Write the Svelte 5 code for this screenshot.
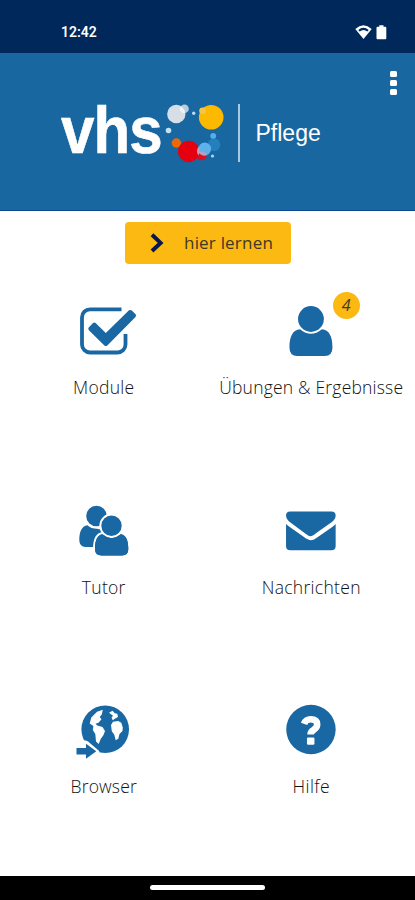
<script>
  const tiles = [
    { icon: 'module', label: 'Module', spacing: 0.3 },
    { icon: 'user', label: 'Übungen & Ergebnisse', spacing: 0.2, badge: 4 },
    { icon: 'users', label: 'Tutor', spacing: 0.3 },
    { icon: 'mail', label: 'Nachrichten', spacing: 0.3 },
    { icon: 'globe', label: 'Browser', spacing: 0.15 },
    { icon: 'help', label: 'Hilfe', spacing: 0.4 }
  ];
</script>

<div class="screen">
  <div class="status">
    <span class="time">12:42</span>
    <svg width="34" height="18" viewBox="354 23 34 18">
      <path d="M363.500 39 L355.300 29 Q363.500 21.600 371.700 29 Z" fill="#fff" />
      <path d="M358.300 29.900 Q363.500 25.700 368.700 29.900 L367.400 31.500 Q363.500 28.500 359.600 31.500 Z" fill="#00285a" />
      <path d="M379.300 25.200h4.200v1.600h1.800q1 0 1 1v10.500q0 1-1 1h-7.800q-1 0-1-1v-10.500q0-1 1-1h1.800z" fill="#fff" />
    </svg>
  </div>

  <header>
    <div class="brand">
      <span class="vhs">vhs</span>
      <svg class="dots" width="62" height="64" viewBox="164 100 62 64">
        <circle cx="184.500" cy="107.800" r="4.300" fill="#b9cde0" />
        <circle cx="176.300" cy="113" r="9.200" fill="#d6dee7" />
        <path d="M180.500 105.200a4.300 4.300 0 0 0 4.500 6.600a9.200 9.200 0 0 0-4.500-6.600" fill="#f0f3f6" />
        <circle cx="193.700" cy="112.200" r="1.700" fill="#b4dcf5" />
        <circle cx="211.200" cy="116.200" r="12.300" fill="#fdb900" />
        <circle cx="202.600" cy="109.800" r="3.400" fill="#f3c64a" />
        <circle cx="168.500" cy="129.500" r="2.800" fill="#c3e2f6" />
        <circle cx="213.200" cy="135" r="2.900" fill="#55aee8" />
        <circle cx="214" cy="143.800" r="6.300" fill="#2480bd" />
        <circle cx="176.400" cy="142" r="4.700" fill="#ef6807" />
        <circle cx="201.500" cy="154" r="5.300" fill="#d51224" />
        <circle cx="188.700" cy="150.500" r="10.700" fill="#e6000f" />
        <circle cx="204.700" cy="148" r="6.400" fill="#5eb2e9" />
        <path d="M199 145.500a10.700 10.700 0 0 1-.5 9a6.400 6.400 0 0 1 .5-9M198.800 151.500a5.300 5.300 0 0 1 8 2.500a6.400 6.400 0 0 1-8-2.500" fill="#bc9fbd" />
        <circle cx="212.500" cy="155" r="1.600" fill="#a9d8f5" />
      </svg>
      <span class="rule"></span>
      <span class="product">Pflege</span>
    </div>
    <div class="more"><i></i><i></i><i></i></div>
  </header>

  <main>
    <button>
      <svg width="16" height="22" viewBox="149 233 16 22">
        <path d="M152 235.800l8.600 8.100l-8.600 8.100" fill="none" stroke="#06194f" stroke-width="4" />
      </svg>
      <span>hier lernen</span>
    </button>

    <div class="grid">
      {#each tiles as t}
        <div class="tile">
          <div class="pic">
            {#if t.icon === 'module'}
              <svg viewBox="54 295 100 70">
                <path d="M121.500 309.300H90a8 8 0 0 0-8 8V344.500a8 8 0 0 0 8 8H117.500a8 8 0 0 0 8-8V334" fill="none" stroke="#1967a3" stroke-width="3.800" />
                <path d="M88.700 327.500L93 322.900Q94.300 322 95.600 323.100L105.800 333L129 310.300Q130.400 309.400 131.800 310.600L135.600 314.300Q136.500 315.600 135.500 316.900L107.300 345.400Q105.800 346.600 104.400 345.400L88.900 330.200Q87.700 328.900 88.700 327.500Z" />
              </svg>
            {:else if t.icon === 'user'}
              <svg viewBox="261.250 295 100 70">
                <circle cx="311.200" cy="319" r="12.900" />
                <path d="M300.300 329.200Q311.200 338.200 322.100 329.200C329.500 329.500 332.700 336.500 332.700 347.500Q332.700 356 325 356H297.500Q289.700 356 289.700 347.500C289.700 336.500 293 329.500 300.300 329.200Z" />
              </svg>
            {:else if t.icon === 'users'}
              <svg viewBox="54 495 100 70">
                <circle cx="96.500" cy="516" r="10.300" />
                <path d="M87.400 525.200Q91 528.800 97 528.800L103 530V547H85.500Q79.300 546.500 79.300 540C79.300 532 81.500 526 87.400 525.200Z" />
                <g stroke="#fff" stroke-width="4" paint-order="stroke" stroke-linejoin="round">
                  <path d="M103.200 534Q111.600 541 120 534C126 534.300 128.300 540 128.300 549Q128.300 555.500 122 555.500H101.500Q95 555.500 95 549C95 540 97.400 534.300 103.200 534Z" />
                  <circle cx="111.500" cy="525.800" r="10.200" />
                </g>
                <path d="M103.200 534.800Q111.600 541.500 120 534.800C126 535 128.300 540 128.300 549Q128.300 555.500 122 555.500H101.500Q95 555.500 95 549C95 540 97.400 535 103.200 534.800Z" />
              </svg>
            {:else if t.icon === 'mail'}
              <svg viewBox="261.250 495 100 70">
                <path d="M290.500 511.400H331.500Q335.900 511.400 335.900 515.500Q335.900 519 332.500 521.700L316.500 533Q312.500 536.300 310.800 536.300Q309 536.300 305.500 533.500L290 522Q286.300 519 286.300 515.600Q286.300 511.400 290.500 511.400Z" />
                <path d="M286.300 524Q287.800 525.500 290 527L303.500 536.500Q308.500 540.300 311.100 540.300Q313.800 540.300 318.500 536.800L332.500 527Q334.500 525.500 335.900 524V546Q335.900 550.300 331.500 550.300H290.500Q286.300 550.300 286.300 546Z" />
              </svg>
            {:else if t.icon === 'globe'}
              <svg viewBox="54 694.500 100 70">
                <circle cx="105.200" cy="729.800" r="23.800" />
                <g fill="#fff">
                  <path d="M89.700 724L91.300 718L97 712.300L102.800 710.300L101.800 715L99.700 717.600L101.500 719.700L98.500 723.300L95.500 724.300L97.300 726L102.500 727.600L105 731.500L103.500 735.500L100.700 739.500L98.700 744.500L96 742L95.300 734.500L92.800 730.500L93.400 726.500Z" />
                  <path d="M109 713.200L112.500 711.300L114.800 713.800L117.300 714.300L118 717.500L114.800 719.300L112.800 720.800L111.500 718.300L113 716.300Z" />
                  <path d="M111 725.500L113 722.300L118.200 721.500L121.300 723.300L122.800 728L122.500 731.500L119.500 734.500L118.300 739.300L115.700 740.700L114.300 735.300L111.800 731.700Z" />
                  <path d="M72 741H86L88 742L99.500 751.700L92 761H72Z" />
                </g>
                <path d="M76.500 748.600H86V744.200L96.300 751.700L86 759.200V754.900H76.500Z" />
              </svg>
            {:else}
              <svg viewBox="261.250 694.500 100 70">
                <circle cx="311.200" cy="730" r="24.700" />
                <path d="M304.300 724.300Q306 719.800 310.900 719.800Q317.400 719.800 317.400 725Q317.400 728 314 730.300Q310.800 732.200 310.800 735" fill="none" stroke="#fff" stroke-width="6.600" />
                <rect x="307.200" y="738" width="7.500" height="7.200" rx="1.200" fill="#fff" />
              </svg>
            {/if}
            {#if t.badge}<span class="badge">{t.badge}</span>{/if}
          </div>
          <span class="label" style="letter-spacing: {t.spacing}px">{t.label}</span>
        </div>
      {/each}
    </div>
  </main>

  <footer><span></span></footer>
</div>

<style>
  :global(body) { margin: 0; background: #fff; }
  .screen { width: 415px; height: 900px; display: flex; flex-direction: column; overflow: hidden; background: #fff; font-family: "Open Sans", "Noto Sans", sans-serif; }
  .status { height: 52.500px; flex: none; box-sizing: border-box; padding: 11px 27px 0 61px; display: flex; align-items: center; justify-content: space-between; background: #00285a; }
  .time { color: #fff; font: 600 14px/20px Roboto, sans-serif; letter-spacing: 0; }
  header { height: 158.500px; flex: none; box-sizing: border-box; border-bottom: 1.500px solid #0c4794; background: #1967a1; display: flex; justify-content: space-between; padding-left: 61px; padding-right: 18px; }
  .brand { display: flex; align-items: center; height: 160px; }
  .vhs { color: #fff; font: bold 66px/64px "Liberation Sans", Arial, sans-serif; width: 103px; letter-spacing: -1px; padding-bottom: 6px; transform: scaleX(0.91); transform-origin: 1px 0; -webkit-text-stroke: 0.600px #fff; }
  .dots { flex: none; }
  .rule { width: 1.500px; height: 58px; margin-left: 12px; background: #a9c9e0; }
  .product { color: #fff; margin-left: 16px; font: 23px/30px "Liberation Sans", Arial, sans-serif; }
  .more { display: flex; flex-direction: column; gap: 2.500px; padding-top: 18px; }
  .more i { width: 7px; height: 6.500px; border-radius: 1.500px; background: #fff; }
  main { flex: 1; min-height: 0; display: flex; flex-direction: column; align-items: center; padding-top: 11px; }
  button { width: 166px; height: 42px; flex: none; margin: 0; border: 0; border-radius: 4px; background: #fbb911; display: flex; align-items: center; padding: 0 0 0 24px; gap: 19.500px; color: #40382b; font: 400 17px/22px "Open Sans", "Noto Sans", sans-serif; letter-spacing: 0.200px; white-space: nowrap; }
  .grid { width: 415px; margin-top: 31px; display: grid; grid-template-columns: 1fr 1fr; grid-auto-rows: 199.500px; }
  .tile { display: flex; flex-direction: column; align-items: center; gap: 11px; }
  .pic { position: relative; width: 100px; height: 70px; }
  .pic svg { width: 100px; height: 70px; display: block; fill: #1967a3; }
  .badge { position: absolute; left: 71.500px; top: -3.500px; width: 27px; height: 27px; border-radius: 50%; background: #fbb911; color: #40382b; font-size: 16px; font-style: italic; line-height: 27px; text-align: center; }
  .label { font-size: 17.500px; line-height: 22px; font-weight: 300; color: #111; white-space: nowrap; }
  footer { height: 24.500px; flex: none; background: #000; display: flex; justify-content: center; align-items: center; }
  footer span { width: 115px; height: 5px; border-radius: 3px; background: #fff; }
</style>
